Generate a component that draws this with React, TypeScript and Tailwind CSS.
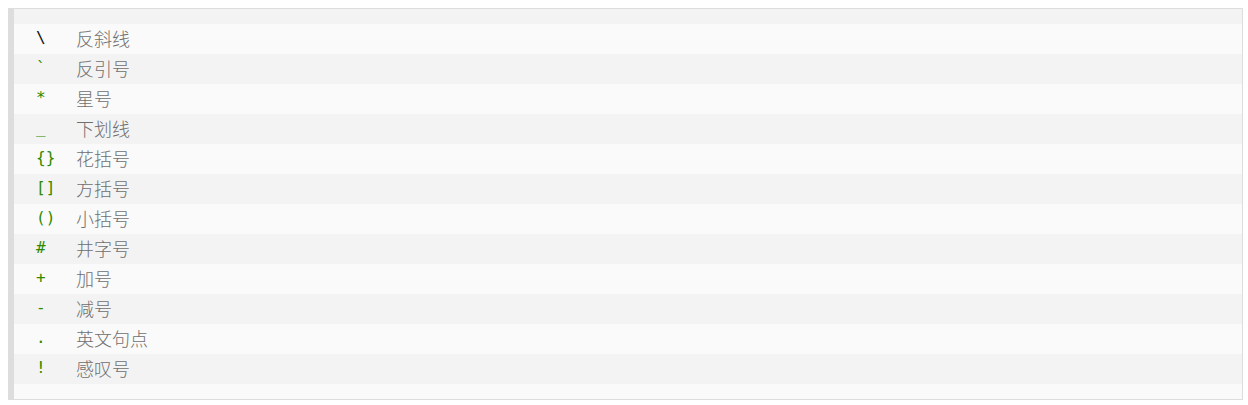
const rows: { sym: string; label: string; dark?: boolean }[] = [
  { sym: "\\", label: "反斜线", dark: true },
  { sym: "`", label: "反引号" },
  { sym: "*", label: "星号" },
  { sym: "_", label: "下划线" },
  { sym: "{}", label: "花括号" },
  { sym: "[]", label: "方括号" },
  { sym: "()", label: "小括号" },
  { sym: "#", label: "井字号" },
  { sym: "+", label: "加号" },
  { sym: "-", label: "减号" },
  { sym: ".", label: "英文句点" },
  { sym: "!", label: "感叹号" },
];

export default function App() {
  return (
    <div className="bg-white pt-2 pb-[5px] pl-2 pr-[5px]">
      <div className="border border-l-[6px] border-[#dddddd]">
        <div className="h-[15px] bg-[#f3f3f3]" />
        {rows.map((row, i) => (
          <div
            key={row.label}
            className={
              "flex h-[30px] items-center pb-[2px] pl-[22px] " +
              (i % 2 === 0 ? "bg-[#fafafa]" : "bg-[#f3f3f3]")
            }
          >
            <span
              className={
                "w-[40px] shrink-0 font-['DejaVu_Sans_Mono',monospace] text-[16px] " +
                (row.dark ? "text-[#111111]" : "text-[#2f8a00]")
              }
            >
              {row.sym}
            </span>
            <span className="font-['Noto_Sans_CJK_SC',sans-serif] text-[18px] font-light text-[#6f6f6f]">
              {row.label}
            </span>
          </div>
        ))}
        <div className="h-[15px] bg-[#fafafa]" />
      </div>
    </div>
  );
}
